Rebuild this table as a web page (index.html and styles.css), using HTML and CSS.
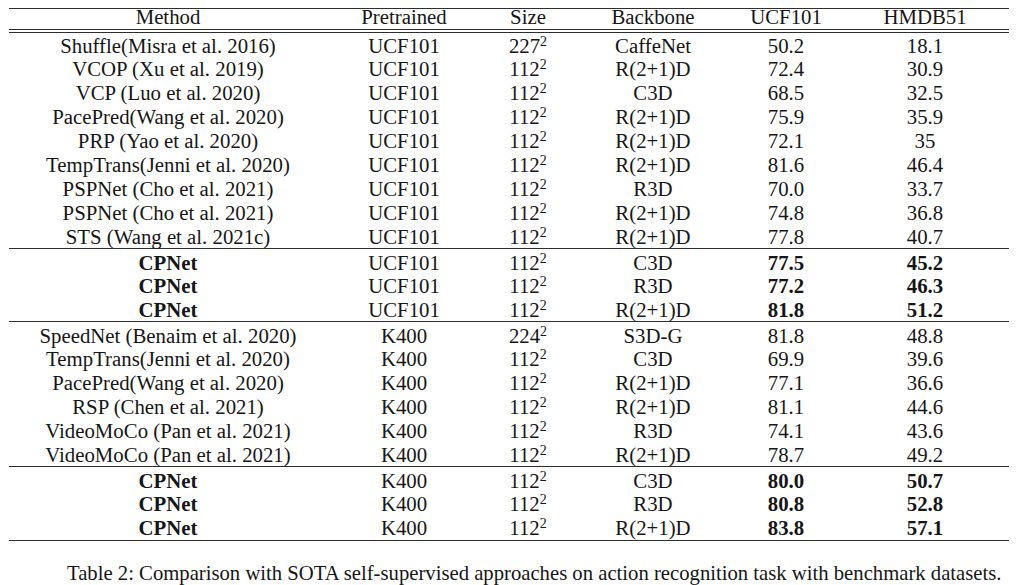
FILE: index.html
```html
<!DOCTYPE html>
<html>
<head>
<meta charset="utf-8">
<link rel="stylesheet" href="styles.css">
</head>
<body>
<div class="page">
<table class="results">
<colgroup>
<col class="c-method"><col class="c-pre"><col class="c-size"><col class="c-bb"><col class="c-ucf"><col class="c-hmdb">
</colgroup>
<thead>
<tr><th>Method</th><th>Pretrained</th><th>Size</th><th>Backbone</th><th>UCF101</th><th>HMDB51</th></tr>
</thead>
<tbody>
<tr><td>Shuffle(Misra et al. 2016)</td><td>UCF101</td><td>227<sup>2</sup></td><td>CaffeNet</td><td>50.2</td><td>18.1</td></tr>
<tr><td>VCOP (Xu et al. 2019)</td><td>UCF101</td><td>112<sup>2</sup></td><td>R(2+1)D</td><td>72.4</td><td>30.9</td></tr>
<tr><td>VCP (Luo et al. 2020)</td><td>UCF101</td><td>112<sup>2</sup></td><td>C3D</td><td>68.5</td><td>32.5</td></tr>
<tr><td>PacePred(Wang et al. 2020)</td><td>UCF101</td><td>112<sup>2</sup></td><td>R(2+1)D</td><td>75.9</td><td>35.9</td></tr>
<tr><td>PRP (Yao et al. 2020)</td><td>UCF101</td><td>112<sup>2</sup></td><td>R(2+1)D</td><td>72.1</td><td>35</td></tr>
<tr><td>TempTrans(Jenni et al. 2020)</td><td>UCF101</td><td>112<sup>2</sup></td><td>R(2+1)D</td><td>81.6</td><td>46.4</td></tr>
<tr><td>PSPNet (Cho et al. 2021)</td><td>UCF101</td><td>112<sup>2</sup></td><td>R3D</td><td>70.0</td><td>33.7</td></tr>
<tr><td>PSPNet (Cho et al. 2021)</td><td>UCF101</td><td>112<sup>2</sup></td><td>R(2+1)D</td><td>74.8</td><td>36.8</td></tr>
<tr><td>STS (Wang et al. 2021c)</td><td>UCF101</td><td>112<sup>2</sup></td><td>R(2+1)D</td><td>77.8</td><td>40.7</td></tr>
</tbody>
<tbody class="group">
<tr><td class="b">CPNet</td><td>UCF101</td><td>112<sup>2</sup></td><td>C3D</td><td class="b">77.5</td><td class="b">45.2</td></tr>
<tr><td class="b">CPNet</td><td>UCF101</td><td>112<sup>2</sup></td><td>R3D</td><td class="b">77.2</td><td class="b">46.3</td></tr>
<tr><td class="b">CPNet</td><td>UCF101</td><td>112<sup>2</sup></td><td>R(2+1)D</td><td class="b">81.8</td><td class="b">51.2</td></tr>
</tbody>
<tbody class="group">
<tr><td>SpeedNet (Benaim et al. 2020)</td><td>K400</td><td>224<sup>2</sup></td><td>S3D-G</td><td>81.8</td><td>48.8</td></tr>
<tr><td>TempTrans(Jenni et al. 2020)</td><td>K400</td><td>112<sup>2</sup></td><td>C3D</td><td>69.9</td><td>39.6</td></tr>
<tr><td>PacePred(Wang et al. 2020)</td><td>K400</td><td>112<sup>2</sup></td><td>R(2+1)D</td><td>77.1</td><td>36.6</td></tr>
<tr><td>RSP (Chen et al. 2021)</td><td>K400</td><td>112<sup>2</sup></td><td>R(2+1)D</td><td>81.1</td><td>44.6</td></tr>
<tr><td>VideoMoCo (Pan et al. 2021)</td><td>K400</td><td>112<sup>2</sup></td><td>R3D</td><td>74.1</td><td>43.6</td></tr>
<tr><td>VideoMoCo (Pan et al. 2021)</td><td>K400</td><td>112<sup>2</sup></td><td>R(2+1)D</td><td>78.7</td><td>49.2</td></tr>
</tbody>
<tbody class="group last">
<tr><td class="b">CPNet</td><td>K400</td><td>112<sup>2</sup></td><td>C3D</td><td class="b">80.0</td><td class="b">50.7</td></tr>
<tr><td class="b">CPNet</td><td>K400</td><td>112<sup>2</sup></td><td>R3D</td><td class="b">80.8</td><td class="b">52.8</td></tr>
<tr><td class="b">CPNet</td><td>K400</td><td>112<sup>2</sup></td><td>R(2+1)D</td><td class="b">83.8</td><td class="b">57.1</td></tr>
</tbody>
</table>
<p class="caption">Table 2: Comparison with SOTA self-supervised approaches on action recognition task with benchmark datasets.</p>
</div>
</body>
</html>
```

FILE: styles.css
```css
html, body {
  margin: 0;
  padding: 0;
  background: #ffffff;
}

.page {
  padding: 8px 15px 0 9px;
  font-family: "Liberation Serif", "Times New Roman", serif;
  font-size: 20.8px;
  color: #161616;
}

.results {
  width: 1000px;
  border-collapse: separate;
  border-spacing: 0;
  table-layout: fixed;
}

.c-method { width: 318px; }
.c-pre { width: 154px; }
.c-size { width: 94px; }
.c-bb { width: 156px; }
.c-ucf { width: 110px; }
.c-hmdb { width: 168px; }

.results th,
.results td {
  box-sizing: border-box;
  padding: 1.5px 0 0 0;
  height: 23.9px;
  text-align: center;
  vertical-align: top;
  line-height: 22px;
  white-space: nowrap;
}

.results th {
  font-weight: normal;
  padding: 0;
  height: 25px;
  line-height: 16px;
  border-top: 1px solid #2e2e2e;
  border-bottom: 4px double #2e2e2e;
}

.results tbody.group tr:first-child td {
  border-top: 1px solid #2e2e2e;
  height: 24.9px;
  padding-top: 2.5px;
}

.results tbody.last tr:last-child td {
  border-bottom: 1px solid #2e2e2e;
  height: 24.9px;
}

.results sup {
  font-size: 14px;
  line-height: 0;
  vertical-align: 7px;
}

.b {
  font-weight: bold;
}

.caption {
  margin: 20px 0 0 58px;
  font-size: 20.7px;
  line-height: 24px;
  white-space: nowrap;
}
```
